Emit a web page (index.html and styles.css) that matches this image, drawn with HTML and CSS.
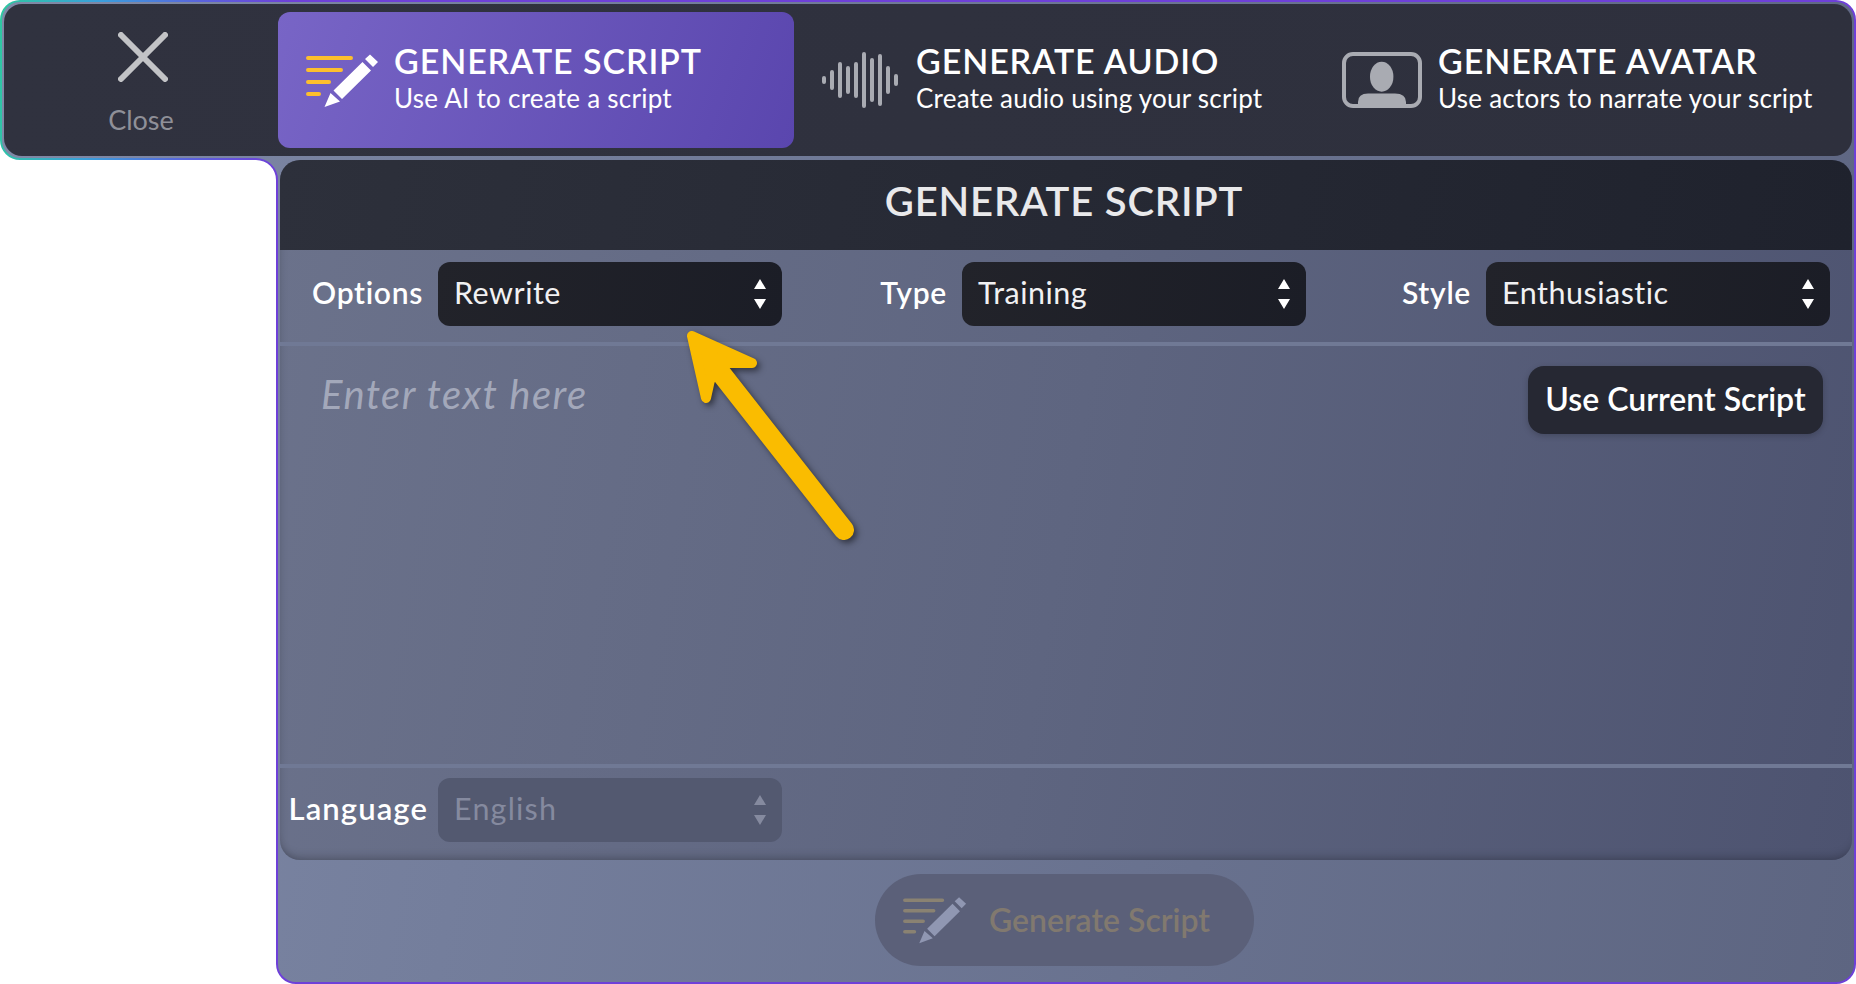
FILE: index.html
```html
<!DOCTYPE html>
<html lang="en">
<head>
<meta charset="UTF-8" />
<meta name="viewport" content="width=device-width, initial-scale=1" />
<title>Generate Script</title>
<link rel="stylesheet" href="styles.css">
</head>
<body>
  <svg class="defs" aria-hidden="true">
    <symbol id="pencil-lines" viewBox="0 0 73 56">
      <path class="lines" d="M2 6H45M2 18H35M2 30H23M2 42H13" />
      <path class="pencil" d="M18.5 55L24.5 41L34 49.5ZM27.5 38.5L56.5 10L65 18.5L36 47ZM59 7L64 2.5L72 10L67 15Z" />
    </symbol>
  </svg>

  <div class="frame">
    <div class="fill">
      <header class="topbar">
        <button class="close">
          <svg class="close-icon" viewBox="0 0 50 50"><path d="M3 3L47 47M47 3L3 47" /></svg>
          <span>Close</span>
        </button>
        <div class="tab tab-script active">
          <svg class="tab-icon icon-script"><use href="#pencil-lines" /></svg>
          <div class="tab-text">
            <div class="tab-title">GENERATE SCRIPT</div>
            <div class="tab-sub">Use AI to create a script</div>
          </div>
        </div>
        <div class="tab tab-audio">
          <svg class="tab-icon icon-audio" viewBox="0 0 76 56">
            <path d="M2 26V30M10 20V36M18 12V44M26 16V40M34 12V44M42 2V54M50 8V48M58 4V52M66 16V40M74 24V32" />
          </svg>
          <div class="tab-text">
            <div class="tab-title">GENERATE AUDIO</div>
            <div class="tab-sub">Create audio using your script</div>
          </div>
        </div>
        <div class="tab tab-avatar">
          <svg class="tab-icon icon-avatar" viewBox="0 0 80 56">
            <rect x="2" y="2" width="76" height="52" rx="9" />
            <ellipse cx="39.7" cy="24.7" rx="11.7" ry="15" />
            <path d="M16 55V50Q16 41.5 26 41.5H53Q64 41.5 64 50V55Z" />
          </svg>
          <div class="tab-text">
            <div class="tab-title">GENERATE AVATAR</div>
            <div class="tab-sub">Use actors to narrate your script</div>
          </div>
        </div>
      </header>

      <main class="main">
        <section class="panel">
          <h1 class="panel-head">GENERATE SCRIPT</h1>
          <div class="fields options">
            <div class="field">
              <span class="field-label">Options</span>
              <div class="select"><span>Rewrite</span><svg class="updown" viewBox="0 0 12 30"><path d="M6 0L12 10H0ZM6 30L0 20H12Z" /></svg></div>
            </div>
            <div class="field">
              <span class="field-label">Type</span>
              <div class="select"><span>Training</span><svg class="updown" viewBox="0 0 12 30"><path d="M6 0L12 10H0ZM6 30L0 20H12Z" /></svg></div>
            </div>
            <div class="field">
              <span class="field-label">Style</span>
              <div class="select"><span>Enthusiastic</span><svg class="updown" viewBox="0 0 12 30"><path d="M6 0L12 10H0ZM6 30L0 20H12Z" /></svg></div>
            </div>
          </div>
          <div class="editor">
            <div class="placeholder">Enter text here</div>
            <button class="use-current">Use Current Script</button>
          </div>
          <div class="fields language">
            <div class="field">
              <span class="field-label">Language</span>
              <div class="select disabled"><span>English</span><svg class="updown" viewBox="0 0 12 30"><path d="M6 0L12 10H0ZM6 30L0 20H12Z" /></svg></div>
            </div>
          </div>
        </section>
        <div class="actions">
          <button class="generate" disabled>
            <svg class="generate-icon"><use href="#pencil-lines" /></svg>
            <span>Generate Script</span>
          </button>
        </div>
      </main>
    </div>
  </div>

  <svg class="callout" viewBox="0 0 180 224" aria-hidden="true">
    <path class="callout-shaft" d="M164 208L40 50" />
    <path class="callout-head" d="M12 14L72 41L46 41L30 58L26 76Z" />
  </svg>
</body>
</html>
```

FILE: styles.css
```css
* {
  box-sizing: border-box;
}
body {
  margin: 0;
  background: #fff;
  font-family: Lato, 'Open Sans', sans-serif;
  color: #fff;
  position: relative;
  height: 984px;
  overflow: hidden;
}
button {
  font-family: inherit;
  border: none;
  cursor: pointer;
}
.defs {
  display: none;
}
.lines {
  fill: none;
  stroke: currentColor;
  stroke-width: 4;
  stroke-linecap: round;
}

/* L shaped window: the frame is the gradient border, the fill sits 2px inside */
.frame {
  width: 1856px;
  height: 984px;
  background: linear-gradient(95deg, #2fc8a0 0, #3a9fdc 100px, #5a63dc 200px, #6e40d8 290px, #6e40d8 100%);
  clip-path: path('M20 0H1836A20 20 0 0 1 1856 20V964A20 20 0 0 1 1836 984H296A20 20 0 0 1 276 964V180A20 20 0 0 0 256 160H20A20 20 0 0 1 0 140V20A20 20 0 0 1 20 0Z');
}
.fill {
  height: 984px;
  padding: 4px 4px 0 4px;
  background: linear-gradient(100deg, #7f89a6 0%, #747e9c 30%, #5d6581 100%);
  clip-path: path('M20 2H1836A18 18 0 0 1 1854 20V964A18 18 0 0 1 1836 982H296A18 18 0 0 1 278 964V180A22 22 0 0 0 256 158H20A18 18 0 0 1 2 140V20A18 18 0 0 1 20 2Z');
}

.topbar {
  height: 152px;
  display: flex;
  align-items: center;
  background: linear-gradient(100deg, #30323f, #2e303d);
  border-radius: 18px;
}
.close {
  width: 274px;
  height: 100%;
  padding: 0;
  background: none;
  display: flex;
  flex-direction: column;
  align-items: center;
  color: #8f9098;
  font-size: 27px;
  line-height: 30px;
}
.close-icon {
  width: 50px;
  height: 50px;
  margin: 28px 0 23px 4px;
  fill: none;
  stroke: #c2c3c6;
  stroke-width: 6;
  stroke-linecap: round;
}
.tab {
  height: 136px;
  padding-left: 27px;
  display: flex;
  align-items: center;
  gap: 16px;
  border-radius: 12px;
}
.tab-script {
  width: 516px;
  padding-left: 28px;
  gap: 15px;
}
.tab-audio {
  width: 520px;
  margin-left: 1px;
  gap: 15px;
}
.tab-avatar {
  width: 536px;
}
.active {
  background: linear-gradient(110deg, #7865c6, #5a46ae);
}
.tab-text {
  padding-bottom: 5px;
}
.tab-title {
  font-size: 34px;
  font-weight: 600;
  line-height: 40px;
  letter-spacing: 0.9px;
}
.tab-sub {
  font-size: 26px;
  line-height: 32px;
  margin-top: 1px;
  letter-spacing: 0.25px;
}
.tab-icon {
  flex: none;
  height: 56px;
}
.icon-script {
  width: 73px;
  color: #fdbf2d;
  fill: #fff;
}
.icon-audio {
  width: 76px;
  margin-right: 3px;
  fill: none;
  stroke: #a9abb2;
  stroke-width: 4;
  stroke-linecap: round;
}
.icon-avatar {
  width: 80px;
  fill: #a9abb2;
}
.icon-avatar rect {
  fill: none;
  stroke: #a9abb2;
  stroke-width: 4;
}

.main {
  margin: 4px 0 0 276px;
}
.panel {
  height: 700px;
  display: flex;
  flex-direction: column;
  border-radius: 20px;
  overflow: hidden;
  background: linear-gradient(100deg, #6b728b 0%, #5e6580 50%, #4d5370 100%);
  box-shadow: inset 0 -10px 10px -8px rgba(0, 0, 0, 0.25), inset 6px 0 8px -6px rgba(0, 0, 0, 0.15);
}
.panel-head {
  height: 90px;
  margin: 0;
  padding: 0 4px 9px 0;
  flex: none;
  display: flex;
  align-items: center;
  justify-content: center;
  background: linear-gradient(100deg, #2d303b, #1f222d);
  color: #e9e9eb;
  font-size: 40px;
  font-weight: 600;
  letter-spacing: 0.8px;
}
.fields {
  display: grid;
  grid-template-columns: 502px 1fr 1fr;
  padding-right: 22px;
  flex: none;
}
.options {
  height: 96px;
  padding-top: 12px;
  border-bottom: 4px solid #707995;
}
.language {
  height: 96px;
  padding-top: 10px;
  border-top: 4px solid #707995;
}
.field {
  display: flex;
  justify-content: flex-end;
  align-items: flex-start;
  gap: 15px;
}
.field-label {
  font-size: 30px;
  font-weight: 600;
  line-height: 60px;
  letter-spacing: 0.7px;
}
.language .field {
  gap: 10px;
}
.language .field-label {
  font-size: 31px;
  letter-spacing: 1.1px;
}
.select {
  width: 344px;
  height: 64px;
  padding: 0 16px 4px 16px;
  display: flex;
  align-items: center;
  justify-content: space-between;
  background: linear-gradient(100deg, #22232a, #1b1d26);
  border-radius: 12px;
  font-size: 30.5px;
  letter-spacing: 0.5px;
  color: #f1f1f3;
}
.updown {
  width: 12px;
  height: 30px;
  margin-top: 4px;
  fill: #fff;
}
.select.disabled {
  background: #535970;
  color: #858a9f;
}
.disabled span {
  letter-spacing: 1.2px;
}
.disabled .updown {
  fill: #858a9f;
}

.editor {
  flex: 1;
  display: flex;
  align-items: flex-start;
  justify-content: space-between;
  padding: 20px 29px 0 41px;
}
.placeholder {
  font-size: 40px;
  font-style: italic;
  font-weight: 400;
  line-height: 56px;
  letter-spacing: 1.5px;
  color: #a3a8ba;
}
.use-current {
  width: 295px;
  height: 68px;
  padding: 0 0 3px;
  background: #262833;
  border-radius: 16px;
  color: #fff;
  font-size: 32px;
  font-weight: 600;
  box-shadow: 0 2px 6px rgba(0, 0, 0, 0.2);
}

.actions {
  display: flex;
  justify-content: center;
  padding: 14px 3px 0 0;
}
.generate {
  width: 379px;
  height: 92px;
  padding: 0 0 2px 28px;
  display: flex;
  align-items: center;
  gap: 22px;
  background: #5b6079;
  border-radius: 46px;
  color: #81796f;
  font-size: 32px;
  font-weight: 600;
}
.generate-icon {
  width: 64px;
  height: 49px;
  color: #8a8272;
  fill: #9097b2;
}

/* annotation arrow drawn over the dialog */
.callout {
  position: absolute;
  left: 680px;
  top: 322px;
  width: 180px;
  height: 224px;
  overflow: visible;
  filter: drop-shadow(3px 3px 3px rgba(0, 0, 0, 0.5));
}
.callout-shaft {
  fill: none;
  stroke: #fabc00;
  stroke-width: 20;
  stroke-linecap: round;
}
.callout-head {
  fill: #fabc00;
  stroke: #fabc00;
  stroke-width: 10;
  stroke-linejoin: round;
}
```
